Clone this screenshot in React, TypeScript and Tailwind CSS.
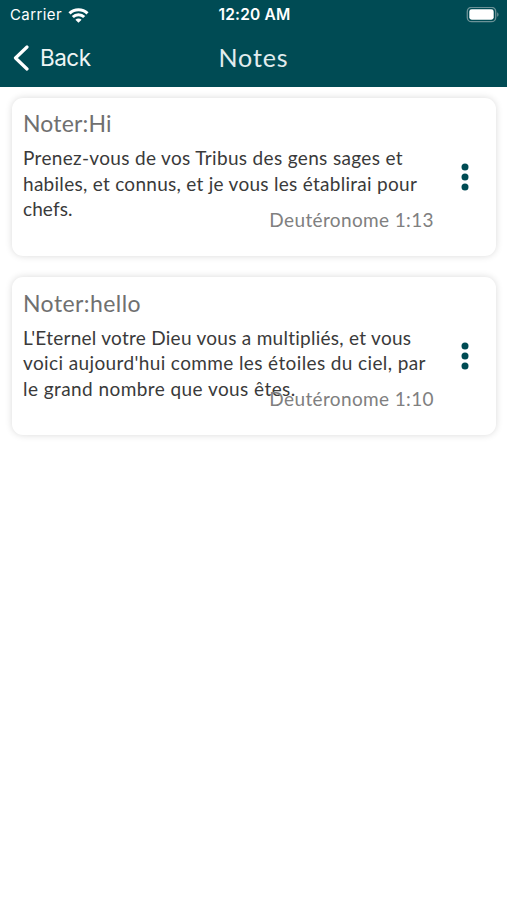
import React from 'react';

interface Note {
  title: string;
  titleClassName: string;
  lines: { text: string; className: string }[];
  reference: string;
}

const notes: Note[] = [
  {
    title: 'Noter:Hi',
    titleClassName: 'tracking-[0.15px]',
    lines: [
      { text: 'Prenez-vous de vos Tribus des gens sages et', className: 'tracking-[0.34px]' },
      { text: 'habiles, et connus, et je vous les établirai pour', className: 'tracking-[0.28px]' },
      { text: 'chefs.', className: 'tracking-[0.1px]' },
    ],
    reference: 'Deutéronome 1:13',
  },
  {
    title: 'Noter:hello',
    titleClassName: 'tracking-[0.42px]',
    lines: [
      { text: "L'Eternel votre Dieu vous a multipliés, et vous", className: 'tracking-[0.27px]' },
      { text: "voici aujourd'hui comme les étoiles du ciel, par", className: 'tracking-[0.38px]' },
      { text: 'le grand nombre que vous êtes.', className: 'tracking-[0.43px]' },
    ],
    reference: 'Deutéronome 1:10',
  },
];

const StatusBar: React.FC = () => (
  <div className="grid h-[30px] grid-cols-3 items-center pl-[10px] pr-[8px] font-['Inter',sans-serif] text-[15px] leading-[30px]">
    <div className="flex items-center gap-[6px]">
      <span className="tracking-[0.4px]">Carrier</span>
      <svg className="h-[15px] w-[21px]" viewBox="0 0 20 15" fill="none" stroke="currentColor" strokeWidth="3">
        <path d="M1 5.4a12.8 12.8 0 0 1 18 0" />
        <path d="M4.3 9a8.1 8.1 0 0 1 11.4 0" />
        <path d="M10 14.8 6.9 11.7a4.4 4.4 0 0 1 6.2 0z" fill="currentColor" stroke="none" />
      </svg>
    </div>
    <span className="text-center text-[15.5px] font-semibold tracking-[0.2px]">12:20 AM</span>
    <svg className="h-[16px] w-[33px] justify-self-end" viewBox="0 0 33 16">
      <rect x="1.3" y="0.3" width="28.4" height="14.4" rx="4.3" fill="none" stroke="#6b9297" strokeWidth="1.3" />
      <rect x="3.3" y="2.3" width="24.4" height="10.4" rx="2.4" fill="white" />
      <path d="M31.2 5.2c1.8.8 1.8 3.8 0 4.6z" fill="#6b9297" />
    </svg>
  </div>
);

const NoteCard: React.FC<{ note: Note }> = ({ note }) => (
  <article className="relative flex h-[158px] rounded-[11px] bg-white pl-[11px] shadow-[0_0_7px_rgba(0,0,0,0.15)]">
    <div className="flex-1 pt-[12.2px]">
      <h2 className="text-[23px] leading-[27px] text-[#707070]">
        <span className={note.titleClassName}>{note.title}</span>
      </h2>
      <div className="mt-[8px] text-[19px] leading-[25.5px] text-[#3a3a3a]">
        {note.lines.map((line) => (
          <p key={line.text} className="whitespace-nowrap">
            <span className={line.className}>{line.text}</span>
          </p>
        ))}
      </div>
    </div>
    <p className="absolute right-[62px] bottom-[23px] text-[19px] leading-[26px] tracking-[0.37px] whitespace-nowrap text-[#808080]">
      {note.reference}
    </p>
    <button type="button" aria-label="Options" className="flex w-[62px] items-center justify-center">
      <svg className="h-[28px] w-[8px]" viewBox="0 0 8 28" fill="#004b54">
        <circle cx="4" cy="4" r="3.5" />
        <circle cx="4" cy="14" r="3.5" />
        <circle cx="4" cy="24" r="3.5" />
      </svg>
    </button>
  </article>
);

const App: React.FC = () => {
  return (
    <div className="min-h-screen bg-white font-['Lato',sans-serif]">
      <header className="h-[87px] bg-[#004b54] text-white">
        <StatusBar />
        <nav className="grid h-[55px] grid-cols-3 items-center pl-[13px] pr-[13px]">
          <button type="button" className="flex items-center gap-[11px]">
            <svg className="h-[26px] w-[16px]" viewBox="0 0 16 26" fill="none" stroke="currentColor" strokeWidth="3.2" strokeLinecap="round" strokeLinejoin="round">
              <path d="M14 2 2.5 13 14 24" />
            </svg>
            <span className="font-['Inter',sans-serif] text-[22.5px] tracking-[-0.5px] text-[#eef5f5]">Back</span>
          </button>
          <h1 className="text-center text-[25px] tracking-[0.9px] text-[#e2ecee]">Notes</h1>
        </nav>
      </header>
      <main className="flex flex-col gap-[21.4px] pt-[11px] pr-[11px] pl-[12px]">
        {notes.map((note) => (
          <NoteCard key={note.title} note={note} />
        ))}
      </main>
    </div>
  );
};

export default App;
